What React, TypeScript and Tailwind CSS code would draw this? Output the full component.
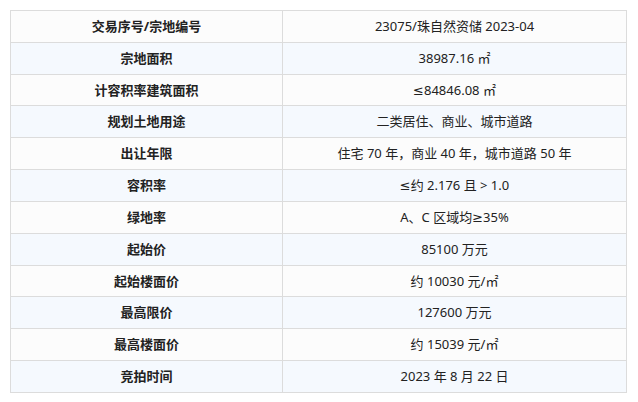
const rows: [string, string][] = [
  ["交易序号/宗地编号", "23075/珠自然资储 2023-04"],
  ["宗地面积", "38987.16 ㎡"],
  ["计容积率建筑面积", "≤84846.08 ㎡"],
  ["规划土地用途", "二类居住、商业、城市道路"],
  ["出让年限", "住宅 70 年，商业 40 年，城市道路 50 年"],
  ["容积率", "≤约 2.176 且 > 1.0"],
  ["绿地率", "A、C 区域均≥35%"],
  ["起始价", "85100 万元"],
  ["起始楼面价", "约 10030 元/㎡"],
  ["最高限价", "127600 万元"],
  ["最高楼面价", "约 15039 元/㎡"],
  ["竞拍时间", "2023 年 8 月 22 日"],
];

export default function App() {
  return (
    <div className="h-[402px] w-[638px] bg-white pl-[10px] pt-[10px] font-['Noto_Sans','DejaVu_Sans','Noto_Sans_CJK_SC',sans-serif] text-[13px] text-[#222]">
      <table className="w-[617px] table-fixed border-collapse">
        <colgroup>
          <col className="w-[272px]" />
          <col />
        </colgroup>
        <tbody>
          {rows.map(([label, value], i) => (
            <tr
              key={label}
              className={i % 2 === 0 ? "h-[31.83px] bg-[#fcfcfc]" : "h-[31.83px] bg-[#f5f9fe]"}
            >
              <td className="border border-[#dcdcdc] p-0 text-center font-bold leading-none">
                {label}
              </td>
              <td className="border border-[#dcdcdc] p-0 text-center leading-none">{value}</td>
            </tr>
          ))}
        </tbody>
      </table>
    </div>
  );
}
